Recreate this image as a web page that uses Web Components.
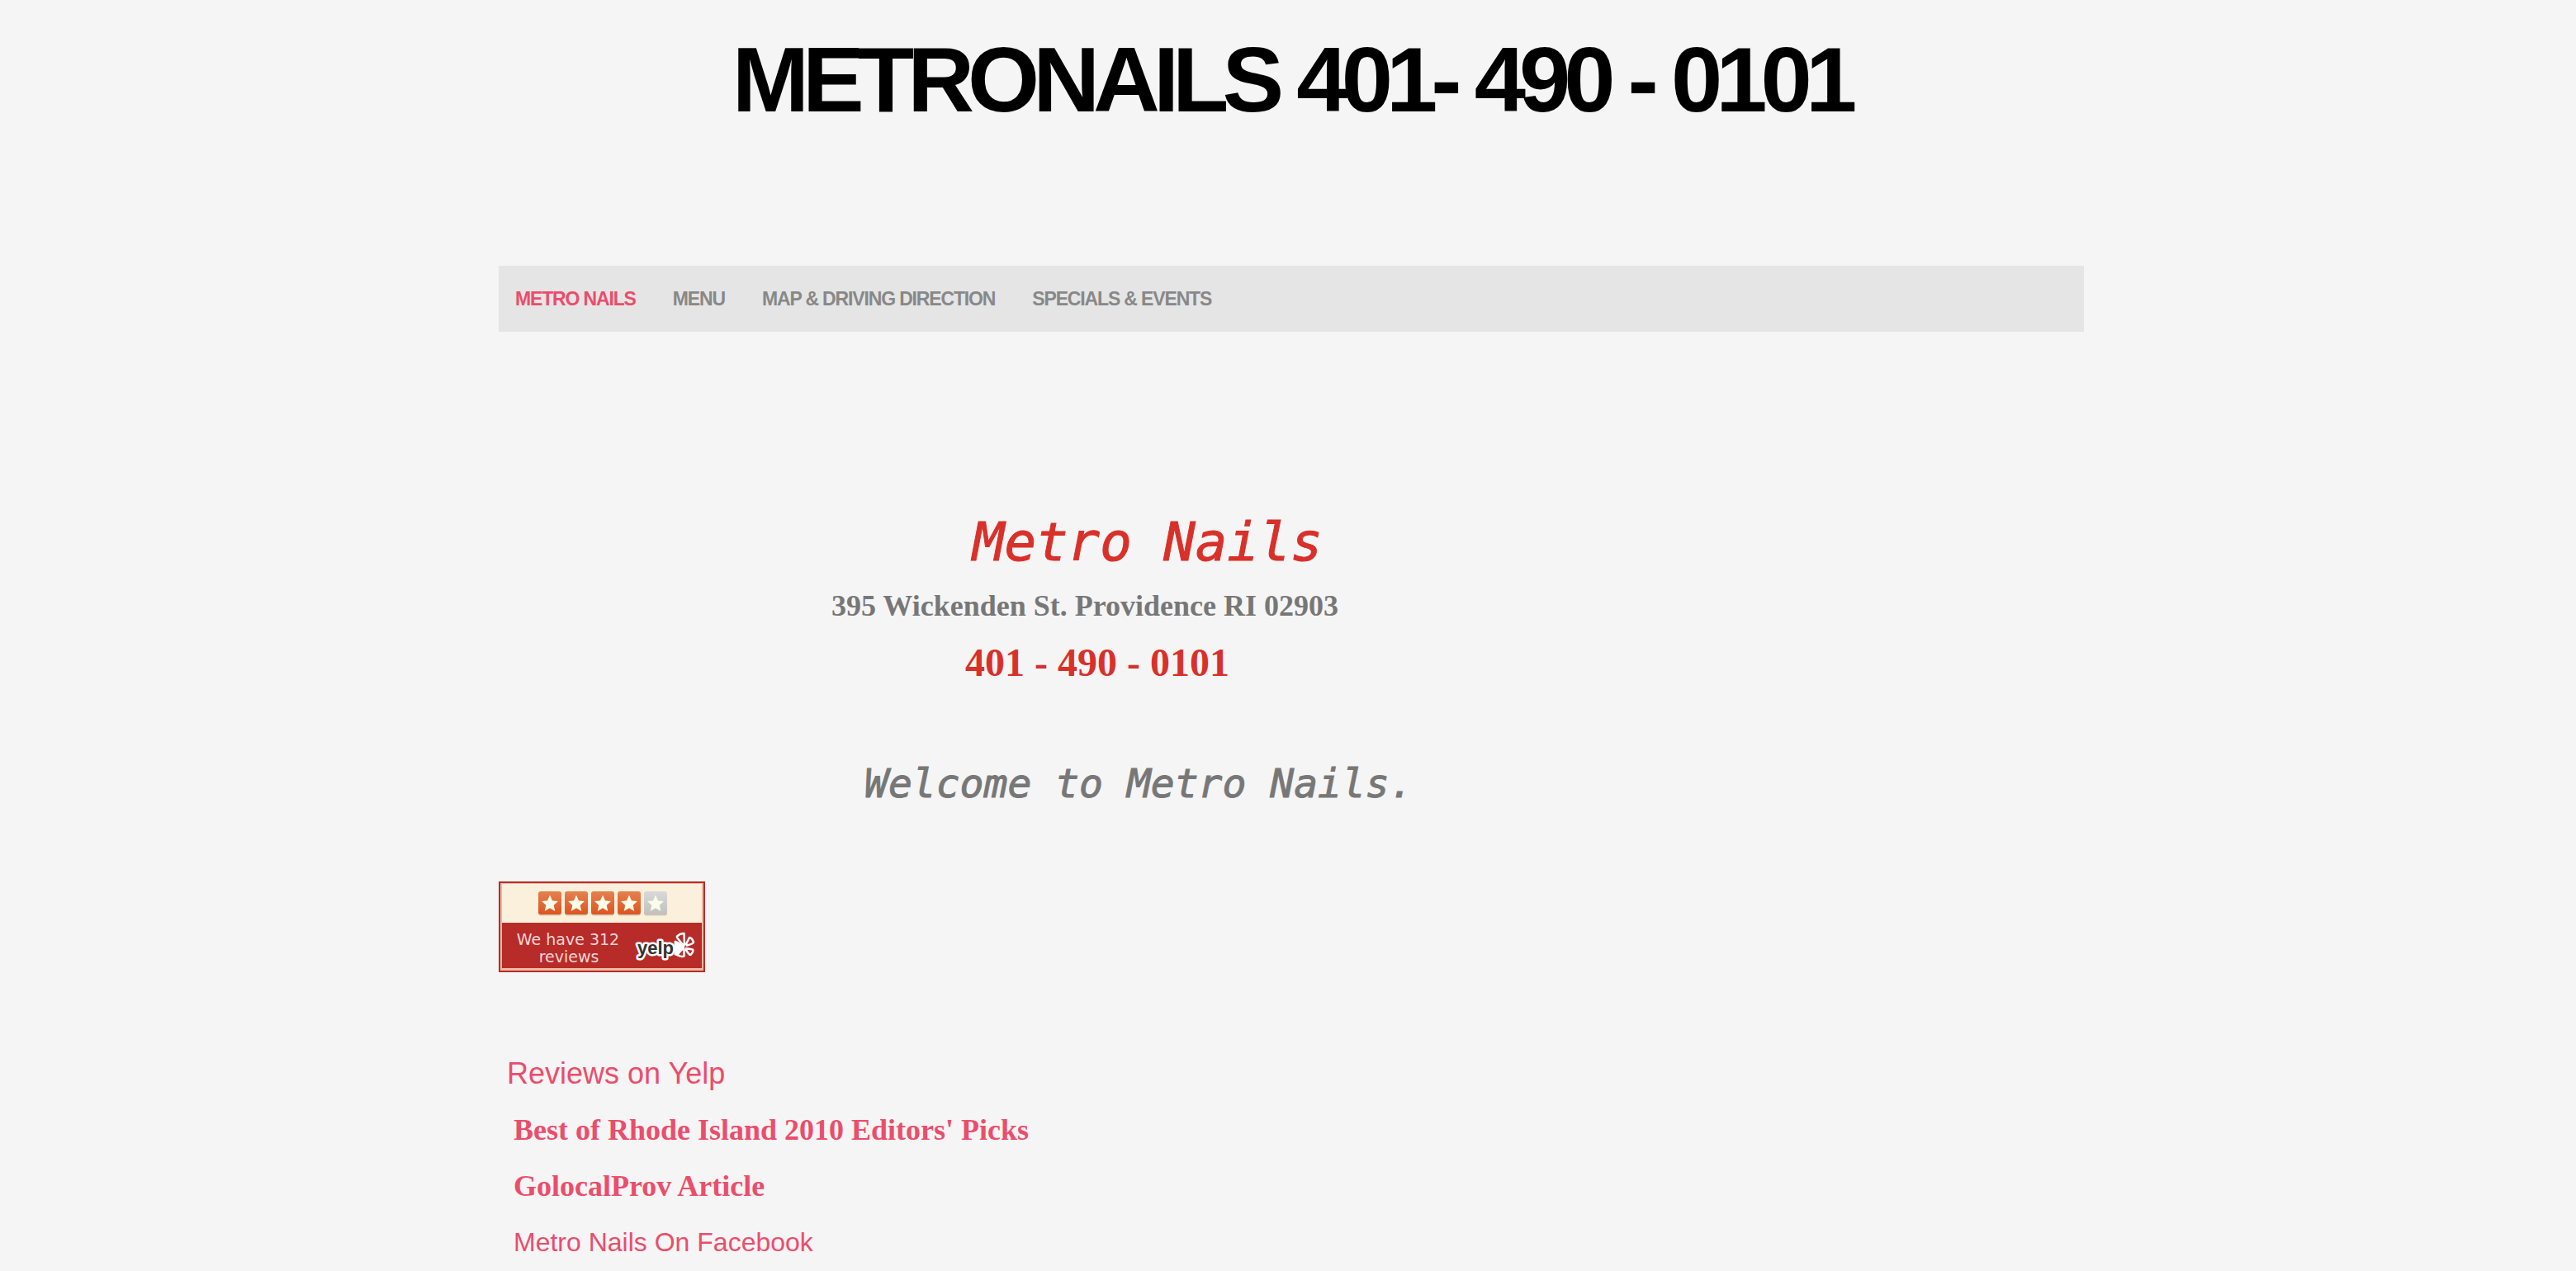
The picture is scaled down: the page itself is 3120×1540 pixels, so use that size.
<!DOCTYPE html>
<html lang="en">
<head>
<meta charset="utf-8">
<title>Metro Nails</title>
<style>
body { margin: 0; background: #f5f5f5; color: #777; font-family: Arial, "Liberation Sans", sans-serif; }
</style>
</head>
<body>
<metro-page>
  <site-title slot="title">METRONAILS 401- 490 - 0101</site-title>
  <site-nav slot="nav"></site-nav>
  <welcome-block></welcome-block>
  <yelp-badge></yelp-badge>
  <link-list></link-list>
</metro-page>
<script>
function define(name, html) {
  customElements.define(name, class extends HTMLElement {
    constructor() {
      super();
      this.attachShadow({ mode: "open" }).innerHTML = html;
    }
  });
}

define("metro-page", `
<style>
:host { display: block; max-width: 1920px; margin: 0 auto; padding: 33px 0 8px 8px; }
</style>
<header><slot name="title"></slot><slot name="nav"></slot></header>
<main><slot></slot></main>`);

define("site-title", `
<style>
:host { display: block; margin-bottom: 161px; }
h1 { margin: 0; color: #000; font-size: 112px; line-height: 128px; font-weight: 700; letter-spacing: -8px; text-align: center; }
</style>
<h1><slot></slot></h1>`);

define("site-nav", `
<style>
:host { display: block; background: #e5e5e5; }
nav { display: flex; align-items: center; gap: 45px; height: 80px; padding: 0 20px; }
a { color: #888; font-size: 23px; line-height: 24px; font-weight: 700; letter-spacing: -0.05em; text-decoration: none; }
a[aria-current] { color: #eb4d6b; }
</style>
<nav>
<a href="#home" aria-current="page">METRO NAILS</a>
<a href="#menu">MENU</a>
<a href="#map">MAP &amp; DRIVING DIRECTION</a>
<a href="#specials">SPECIALS &amp; EVENTS</a>
</nav>`);

define("welcome-block", `
<style>
:host { display: block; margin: 212px 0 85px; }
h2, p { margin: 0; }
h2, .welcome { font-family: "DejaVu Sans Mono", monospace; font-style: italic; font-weight: 400; -webkit-text-stroke: 1px currentColor; }
h2 { padding-left: 574px; font-size: 64px; line-height: 86px; color: #d9302a; }
.address, .phone { font-family: "Liberation Serif", serif; font-weight: 700; }
.address { padding-left: 403px; font-size: 36px; line-height: 68px; }
.phone { padding-left: 565px; font-size: 48px; line-height: 70px; color: #d9302a; }
.welcome { margin-top: 77px; padding-left: 443px; font-size: 48px; line-height: 68px; }
</style>
<h2>Metro Nails</h2>
<p class="address">395 Wickenden St. Providence RI 02903</p>
<p class="phone">401 - 490 - 0101</p>
<p class="welcome">Welcome to Metro Nails.</p>`);

define("yelp-badge", `
<style>
:host { display: block; margin-bottom: 89px; }
a { display: block; width: 250px; }
svg { display: block; width: 100%; }
</style>
<a href="#yelp" aria-label="Yelp reviews">
<svg viewBox="0 0 250 110">
<defs>
<linearGradient id="on" x2="0" y2="1"><stop stop-color="#e48150"/><stop offset="1" stop-color="#de5420"/></linearGradient>
<linearGradient id="off" x2="0" y2="1"><stop stop-color="#d9dad8"/><stop offset="1" stop-color="#c0c0be"/></linearGradient>
<path id="star" d="M14 4.500l3 6.700 7 .7-5.300 4.900 1.600 7.200-6.300-3.800-6.300 3.800 1.600-7.200L4 11.900l7-.7z" fill="#fafdea"/>
</defs>
<rect width="250" height="110" fill="#b72c28"/>
<rect x="2" y="2" width="246" height="106" fill="#ebb9a2"/>
<rect x="4" y="3" width="242" height="47" fill="#faf0dc"/>
<rect x="4" y="50" width="242" height="55" fill="#b72c28"/>
<g>
<g transform="translate(48 12)"><rect y="1" width="28" height="28.500" rx="3" fill="#d5c6b0"/><rect width="28" height="28" rx="3" fill="url(#on)"/><use href="#star"/></g>
<g transform="translate(80 12)"><rect y="1" width="28" height="28.500" rx="3" fill="#d5c6b0"/><rect width="28" height="28" rx="3" fill="url(#on)"/><use href="#star"/></g>
<g transform="translate(112 12)"><rect y="1" width="28" height="28.500" rx="3" fill="#d5c6b0"/><rect width="28" height="28" rx="3" fill="url(#on)"/><use href="#star"/></g>
<g transform="translate(144 12)"><rect y="1" width="28" height="28.500" rx="3" fill="#d5c6b0"/><rect width="28" height="28" rx="3" fill="url(#on)"/><use href="#star"/></g>
<g transform="translate(176 12)"><rect y="1" width="28" height="28.500" rx="3" fill="#d5c6b0"/><rect width="28" height="28" rx="3" fill="url(#off)"/><use href="#star"/></g>
</g>
<g fill="#f6d5d8" font-family="'DejaVu Sans', sans-serif" font-size="19" text-anchor="middle">
<text x="84" y="77">We have 312</text>
<text x="85" y="98">reviews</text>
</g>
<path d="M214 73l10 5-3 12-7-2z" fill="#fff" stroke="#fff" stroke-width="3" stroke-linejoin="round"/>
<g fill="#b72c28" stroke="#fff" stroke-width="2.500" stroke-linejoin="round">
<path d="M216.500 66q4-3.500 8-3l.5 13.500q-1 1-2.500-.5l-6.500-8q-.5-1 .5-2z"/>
<path d="M227 76l4-8q3 0 5 5.500 0 2-8 4z"/>
<path d="M227 81l8 1.500q1.500 2-2.500 6.500-2 0-5.500-6z"/>
<path d="M224.500 82v8.500q-2.500 1.500-7.500-1 0-2.500 6-8z"/>
</g>
<text x="168" y="88" font-family="'Liberation Sans', sans-serif" font-size="22" font-weight="700" fill="#333" stroke="#fff" stroke-width="5" stroke-linejoin="round" paint-order="stroke">yelp</text>
</svg>
</a>`);

define("link-list", `
<style>
:host { display: block; }
ul { list-style: none; margin: 0; padding: 0; }
li { font-size: 36px; line-height: 68px; padding-left: 18px; }
a { color: #eb4d6b; text-decoration: none; }
.lead { padding-left: 10px; }
.serif { font-family: "Liberation Serif", serif; font-weight: 700; }
.small { font-size: 32px; }
</style>
<ul>
<li class="lead"><a href="#reviews">Reviews on Yelp</a></li>
<li class="serif"><a href="#best">Best of Rhode Island 2010 Editors' Picks</a></li>
<li class="serif"><a href="#article">GolocalProv Article</a></li>
<li class="small"><a href="#facebook">Metro Nails On Facebook</a></li>
</ul>`);
</script>
</body>
</html>
